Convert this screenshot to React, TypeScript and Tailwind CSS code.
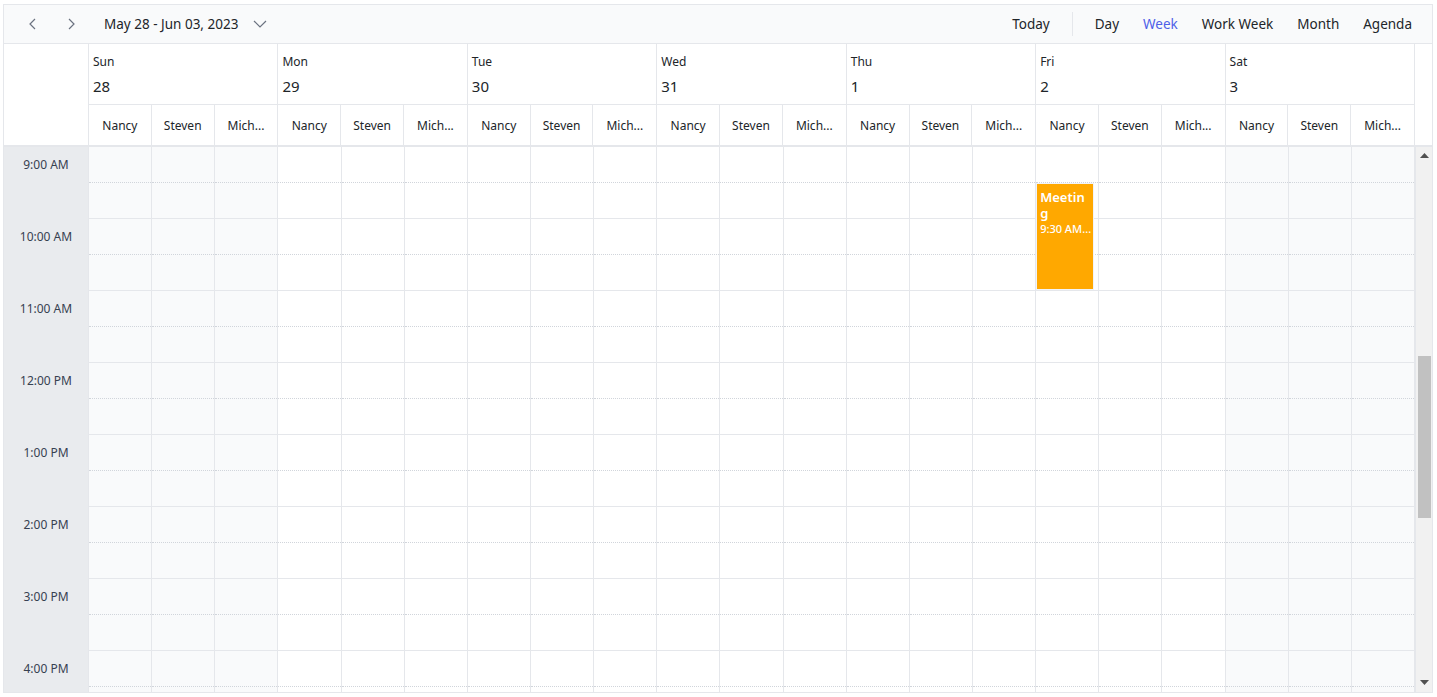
import React from "react";

const days = [
  { name: "Sun", date: "28", off: true },
  { name: "Mon", date: "29", off: false },
  { name: "Tue", date: "30", off: false },
  { name: "Wed", date: "31", off: false },
  { name: "Thu", date: "1", off: false },
  { name: "Fri", date: "2", off: false },
  { name: "Sat", date: "3", off: true },
];

const people = ["Nancy", "Steven", "Mich..."];
const hours = ["9:00 AM", "10:00 AM", "11:00 AM", "12:00 PM", "1:00 PM", "2:00 PM", "3:00 PM", "4:00 PM"];

function Chevron({ dir }: { dir: "left" | "right" | "down" }) {
  const d =
    dir === "left" ? "M10 3 L5 8 L10 13" : dir === "right" ? "M6 3 L11 8 L6 13" : "M2 5 L8 11 L14 5";
  return (
    <svg width="16" height="16" viewBox="0 0 16 16" fill="none" stroke="#6b7280" strokeWidth="1.2">
      <path d={d} />
    </svg>
  );
}

export default function App() {
  return (
    <div className="min-h-screen bg-white pt-[4px] pl-[3px] font-['Segoe_UI','Noto_Sans',sans-serif] text-[#212529]">
      <div className="w-[1430px] h-[689px] border border-[#e5e7eb] flex flex-col overflow-hidden">
        {/* toolbar */}
        <div className="h-[39px] shrink-0 bg-[#f9fafb] border-b border-[#e5e7eb] flex items-center text-[13.5px]">
          <button className="ml-[21px] w-[16px] flex justify-center">
            <Chevron dir="left" />
          </button>
          <button className="ml-[22px] w-[16px] flex justify-center">
            <Chevron dir="right" />
          </button>
          <div className="ml-[25px] flex items-center gap-[14px]">
            <span>May 28 - Jun 03, 2023</span>
            <Chevron dir="down" />
          </div>
          <div className="ml-auto flex items-center mr-[20px]">
            <span>Today</span>
            <div className="w-px h-[24px] bg-[#e5e7eb] mx-[22px]" />
            <div className="flex items-center gap-[24px]">
              <span>Day</span>
              <span className="text-[#4f5fe8]">Week</span>
              <span>Work Week</span>
              <span>Month</span>
              <span>Agenda</span>
            </div>
          </div>
        </div>

        {/* header */}
        <div className="flex shrink-0 border-b-2 border-[#e5e7eb]">
          <div className="w-[85px] shrink-0 border-r border-[#e5e7eb]" />
          <div className="w-[1326px] grid grid-cols-7">
            {days.map((d) => (
              <div key={d.name} className="border-r border-[#e5e7eb] flex flex-col">
                <div className="h-[61px] border-b border-[#e5e7eb] px-[4px] pt-[11px]">
                  <div className="text-[12px] leading-[14px]">{d.name}</div>
                  <div className="text-[15px] leading-[18px] mt-[8px]">{d.date}</div>
                </div>
                <div className="h-[40px] grid grid-cols-3">
                  {people.map((p, i) => (
                    <div
                      key={p}
                      className={`flex items-center justify-center text-[12px] pt-[2px] ${i < 2 ? "border-r border-[#e5e7eb]" : ""}`}
                    >
                      {p}
                    </div>
                  ))}
                </div>
              </div>
            ))}
          </div>
          <div className="w-[17px] shrink-0" />
        </div>

        {/* body */}
        <div className="flex flex-1 overflow-hidden">
          <div className="w-[85px] shrink-0 bg-[#e9ebee] border-r border-[#e5e7eb] flex flex-col text-[#374151]">
            {hours.map((h) => (
              <div key={h} className="h-[72px] shrink-0 flex justify-center pt-[10px] text-[12px] leading-[16px]">
                {h}
              </div>
            ))}
          </div>
          <div className="w-[1326px] grid grid-cols-21 self-start">
            {days.map((d, di) =>
              people.map((p, pi) => (
                <div
                  key={`${d.name}-${p}`}
                  className={`relative border-r border-[#e5e7eb] flex flex-col ${d.off ? "bg-[#f9fafb]" : "bg-white"}`}
                >
                  {hours.map((h) => (
                    <React.Fragment key={h}>
                      <div className="h-[36px] border-b border-dotted border-[#d1d5db]" />
                      <div className="h-[36px] border-b border-[#e5e7eb]" />
                    </React.Fragment>
                  ))}
                  {di === 5 && pi === 0 && (
                    <div className="absolute top-[36px] left-0 w-[58px] h-[107px] bg-[#ffa800] border border-[#f3f4f6] text-white pl-[3px] pr-[8px] pt-[5px] overflow-hidden">
                      <div className="text-[13px] font-semibold leading-[16px] break-all">Meeting</div>
                      <div className="text-[11px] font-medium leading-[14px] mt-[1px] whitespace-nowrap">9:30 AM...</div>
                    </div>
                  )}
                </div>
              ))
            )}
          </div>
          {/* scrollbar */}
          <div className="w-[17px] shrink-0 bg-[#f1f1f1] flex flex-col items-center border-l border-[#e5e7eb]">
            <svg width="9" height="6" viewBox="0 0 9 6" className="mt-[6px]">
              <path d="M0 5 L4.5 0 L9 5 Z" fill="#505050" />
            </svg>
            <div className="w-[13px] h-[162px] bg-[#c1c1c1] mt-[197px]" />
            <svg width="9" height="6" viewBox="0 0 9 6" className="mt-auto mb-[6px]">
              <path d="M0 0 L4.5 5 L9 0 Z" fill="#505050" />
            </svg>
          </div>
        </div>
      </div>
    </div>
  );
}
